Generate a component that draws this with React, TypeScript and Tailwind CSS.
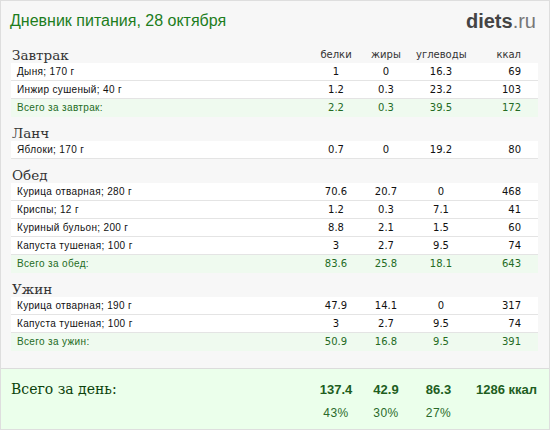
const sections = [
  {
    title: "Завтрак",
    rows: [
      ["Дыня; 170 г", "1", "0", "16.3", "69"],
      ["Инжир сушеный; 40 г", "1.2", "0.3", "23.2", "103"],
    ],
    total: ["Всего за завтрак:", "2.2", "0.3", "39.5", "172"],
  },
  {
    title: "Ланч",
    rows: [["Яблоки; 170 г", "0.7", "0", "19.2", "80"]],
  },
  {
    title: "Обед",
    rows: [
      ["Курица отварная; 280 г", "70.6", "20.7", "0", "468"],
      ["Криспы; 12 г", "1.2", "0.3", "7.1", "41"],
      ["Куриный бульон; 200 г", "8.8", "2.1", "1.5", "60"],
      ["Капуста тушеная; 100 г", "3", "2.7", "9.5", "74"],
    ],
    total: ["Всего за обед:", "83.6", "25.8", "18.1", "643"],
  },
  {
    title: "Ужин",
    rows: [
      ["Курица отварная; 190 г", "47.9", "14.1", "0", "317"],
      ["Капуста тушеная; 100 г", "3", "2.7", "9.5", "74"],
    ],
    total: ["Всего за ужин:", "50.9", "16.8", "9.5", "391"],
  },
];

const grid = "grid grid-cols-[300px_50px_50px_55px_1fr] items-center";

function Row({ cells, total }: { cells: string[]; total?: boolean }) {
  return (
    <div
      className={`${grid} h-[18px] border-b text-[10px] ${
        total
          ? "bg-[#effaef] border-[#effaef] text-[#246b24]"
          : "bg-white border-[#e4e4e4] text-[#111]"
      }`}
    >
      <span className="pl-[6px] text-[10px] tracking-[0.35px] font-['Liberation_Sans',sans-serif]">
        {cells[0]}
      </span>
      <span className="text-center">{cells[1]}</span>
      <span className="text-center">{cells[2]}</span>
      <span className="text-center pl-[5px]">{cells[3]}</span>
      <span className="text-right pr-[17px]">{cells[4]}</span>
    </div>
  );
}

export default function App() {
  return (
    <div
      className="w-[550px] h-[430px] border border-[#dedede] bg-[#f7f7f7] flex flex-col overflow-hidden"
      style={{ fontFamily: '"DejaVu Sans", sans-serif' }}
    >
      <div className="flex justify-between items-center h-[38px] pl-[9px] pr-[13px] pt-[1px]">
        <span className="text-[16px] text-[#1d7d1d] font-['Liberation_Sans',sans-serif]">
          Дневник питания, 28 октября
        </span>
        <span className="text-[20px] text-[#444] font-['Liberation_Sans',sans-serif]">
          <b>diets</b>
          <span className="text-[#777]">.ru</span>
        </span>
      </div>

      <div className="ml-[10px] w-[527px]">
        {sections.map((s, i) => (
          <div key={s.title}>
            <div className={`${grid} h-[24px] items-end`}>
              <span className="pl-[1px] text-[13.5px] leading-[16px] text-[#333] font-['DejaVu_Serif',serif]">
                {s.title}
              </span>
              {i === 0 && (
                <>
                  <span className="text-center text-[10px] leading-[16px] text-[#333]">белки</span>
                  <span className="text-center text-[10px] leading-[16px] text-[#333]">жиры</span>
                  <span className="text-center pl-[5px] text-[10px] leading-[16px] text-[#333]">углеводы</span>
                  <span className="text-right pr-[17px] text-[10px] leading-[16px] text-[#333]">ккал</span>
                </>
              )}
            </div>
            {s.rows.map((r, j) => (
              <Row key={j} cells={r} />
            ))}
            {s.total && <Row cells={s.total} total />}
          </div>
        ))}
      </div>

      <div className="mt-auto h-[61px] border-t border-[#dcdcdc] bg-[#ebffeb] pl-[10px] pt-[10px]">
        <div className={`${grid} w-[527px]`}>
          <span className="text-[14px] text-[#0c420c] font-['DejaVu_Serif',serif]">
            Всего за день:
          </span>
          <span className="text-center text-[13px] font-bold text-[#1e5e1e] font-['Liberation_Sans',sans-serif]">137.4</span>
          <span className="text-center text-[13px] font-bold text-[#1e5e1e] font-['Liberation_Sans',sans-serif]">42.9</span>
          <span className="text-center text-[13px] font-bold text-[#1e5e1e] font-['Liberation_Sans',sans-serif]">86.3</span>
          <span className="text-right text-[13px] font-bold text-[#1e5e1e] font-['Liberation_Sans',sans-serif] pr-[1px]">1286 ккал</span>
        </div>
        <div className={`${grid} w-[527px] mt-[4px] text-[12px] text-[#2a6a2a] tracking-[0.5px] font-['Liberation_Sans',sans-serif]`}>
          <span />
          <span className="text-center">43%</span>
          <span className="text-center">30%</span>
          <span className="text-center">27%</span>
          <span />
        </div>
      </div>
    </div>
  );
}
